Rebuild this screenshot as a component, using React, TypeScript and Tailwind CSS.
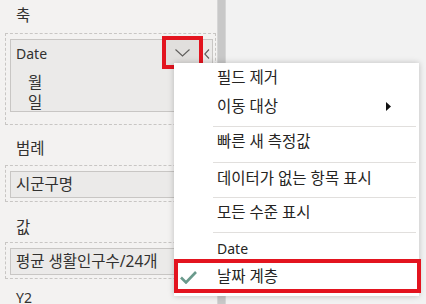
const font = { fontFamily: '"Noto Sans", "Noto Sans CJK KR", sans-serif' }

function FieldWell({ children }: { children: React.ReactNode }) {
  return (
    <div className="ml-[5px] w-[211px] border border-dashed border-[#c8c6c4] pl-1 pr-[2px] pt-[5px] pb-[3px]">
      {children}
    </div>
  )
}

function Pill({ label }: { label: string }) {
  return (
    <div className="h-[27px] border border-[#c8c6c4] bg-[#ebeae9] pl-[5px] text-[15.5px] leading-[25px] text-[#323130] whitespace-nowrap overflow-hidden">
      {label}
    </div>
  )
}

function MenuItem({ label, arrow }: { label: string; arrow?: boolean }) {
  return (
    <div className="relative h-[29px] pl-[43px] text-[15.5px] leading-[29px] text-[#252423]">
      {label}
      {arrow && (
        <svg className="absolute left-[212px] top-[10px]" width="5" height="9" viewBox="0 0 5 9">
          <path d="M0 0 L5 4.5 L0 9 Z" fill="#111" />
        </svg>
      )}
    </div>
  )
}

function Divider({ mt }: { mt: string }) {
  return <div className={`${mt} ml-[39px] mr-[3px] h-px bg-[#e1dfdd]`} />
}

export default function App() {
  return (
    <div className="relative w-[426px] h-[304px] overflow-hidden flex bg-[#f3f2f1]" style={font}>
      {/* left field pane */}
      <div className="w-[217px] shrink-0 pt-[5px]">
        <div className="h-5 pl-4 text-[15.5px] leading-5 text-[#323130]">축</div>
        <div className="mt-2">
          <div className="ml-[5px] w-[211px] border border-dashed border-[#c8c6c4] pl-1 pr-[2px] pt-[5px] pb-[12px]">
            <div className="relative h-[73px] border border-[#c8c6c4] bg-[#ebeae9] text-[#323130]">
              <div className="h-7 pl-[5px] text-[14px] leading-7">Date</div>
              <div className="mt-[4px] h-5 pl-[17px] text-[15.5px] leading-5">월</div>
              <div className="h-5 pl-[17px] text-[15.5px] leading-5">일</div>
              {/* hovered chevron with red highlight */}
              <div className="absolute left-[151px] top-[-4px] w-[41px] h-[33px] border-4 border-[#e3141f] bg-[#e1dfdd] flex items-center justify-center">
                <svg width="15" height="8" viewBox="0 0 15 8">
                  <path d="M0.5 0.5 L7.5 7 L14.5 0.5" fill="none" stroke="#605e5c" strokeWidth="1.1" />
                </svg>
              </div>
              <svg className="absolute left-[193px] top-[9px]" width="6" height="10" viewBox="0 0 6 10">
                <path d="M5 0.5 L0.8 5 L5 9.5" fill="none" stroke="#605e5c" strokeWidth="1.1" />
              </svg>
            </div>
          </div>
        </div>

        <div className="mt-[13px] h-5 pl-4 text-[15.5px] leading-5 text-[#323130]">범례</div>
        <div className="mt-[7px]">
          <FieldWell>
            <Pill label="시군구명" />
          </FieldWell>
        </div>

        <div className="mt-[15px] h-5 pl-4 text-[15.5px] leading-5 text-[#323130]">값</div>
        <div className="mt-[5px]">
          <FieldWell>
            <Pill label="평균 생활인구수/24개" />
          </FieldWell>
        </div>

        <div className="mt-[9px] h-5 pl-4 text-[14px] leading-5 text-[#323130]">Y2</div>
      </div>

      {/* scrollbar */}
      <div className="w-[9px] shrink-0 bg-[#c8c8c8] border-x border-[#d6d6d6]" />
      <div className="flex-1 bg-[#f2f2f2]" />

      {/* context menu */}
      <div className="absolute left-[174px] top-[63px] w-[245px] bg-white shadow-[0_0_6px_rgba(0,0,0,0.22)] pb-[3px]">
        <MenuItem label="필드 제거" />
        <MenuItem label="이동 대상" arrow />
        <Divider mt="mt-[5px]" />
        <MenuItem label="빠른 새 측정값" />
        <Divider mt="mt-[6px]" />
        <div className="h-[30px] pl-[43px] text-[15.5px] leading-[30px] text-[#252423]">데이터가 없는 항목 표시</div>
        <Divider mt="mt-[4px]" />
        <MenuItem label="모든 수준 표시" />
        <Divider mt="mt-[5px]" />
        <div className="h-[26px] pl-[43px] text-[14px] leading-[32px] text-[#252423]">Date</div>
        <div className="relative w-[247px] h-[34px] border-4 border-[#e3141f] pl-[39px] text-[15.5px] leading-[26px] text-[#252423]">
          <svg className="absolute left-[2px] top-[8px]" width="17" height="13" viewBox="0 0 17 13">
            <path d="M1 6.5 L6 11.5 L16 1" fill="none" stroke="#6a9a8c" strokeWidth="2.6" />
          </svg>
          날짜 계층
        </div>
      </div>
    </div>
  )
}
